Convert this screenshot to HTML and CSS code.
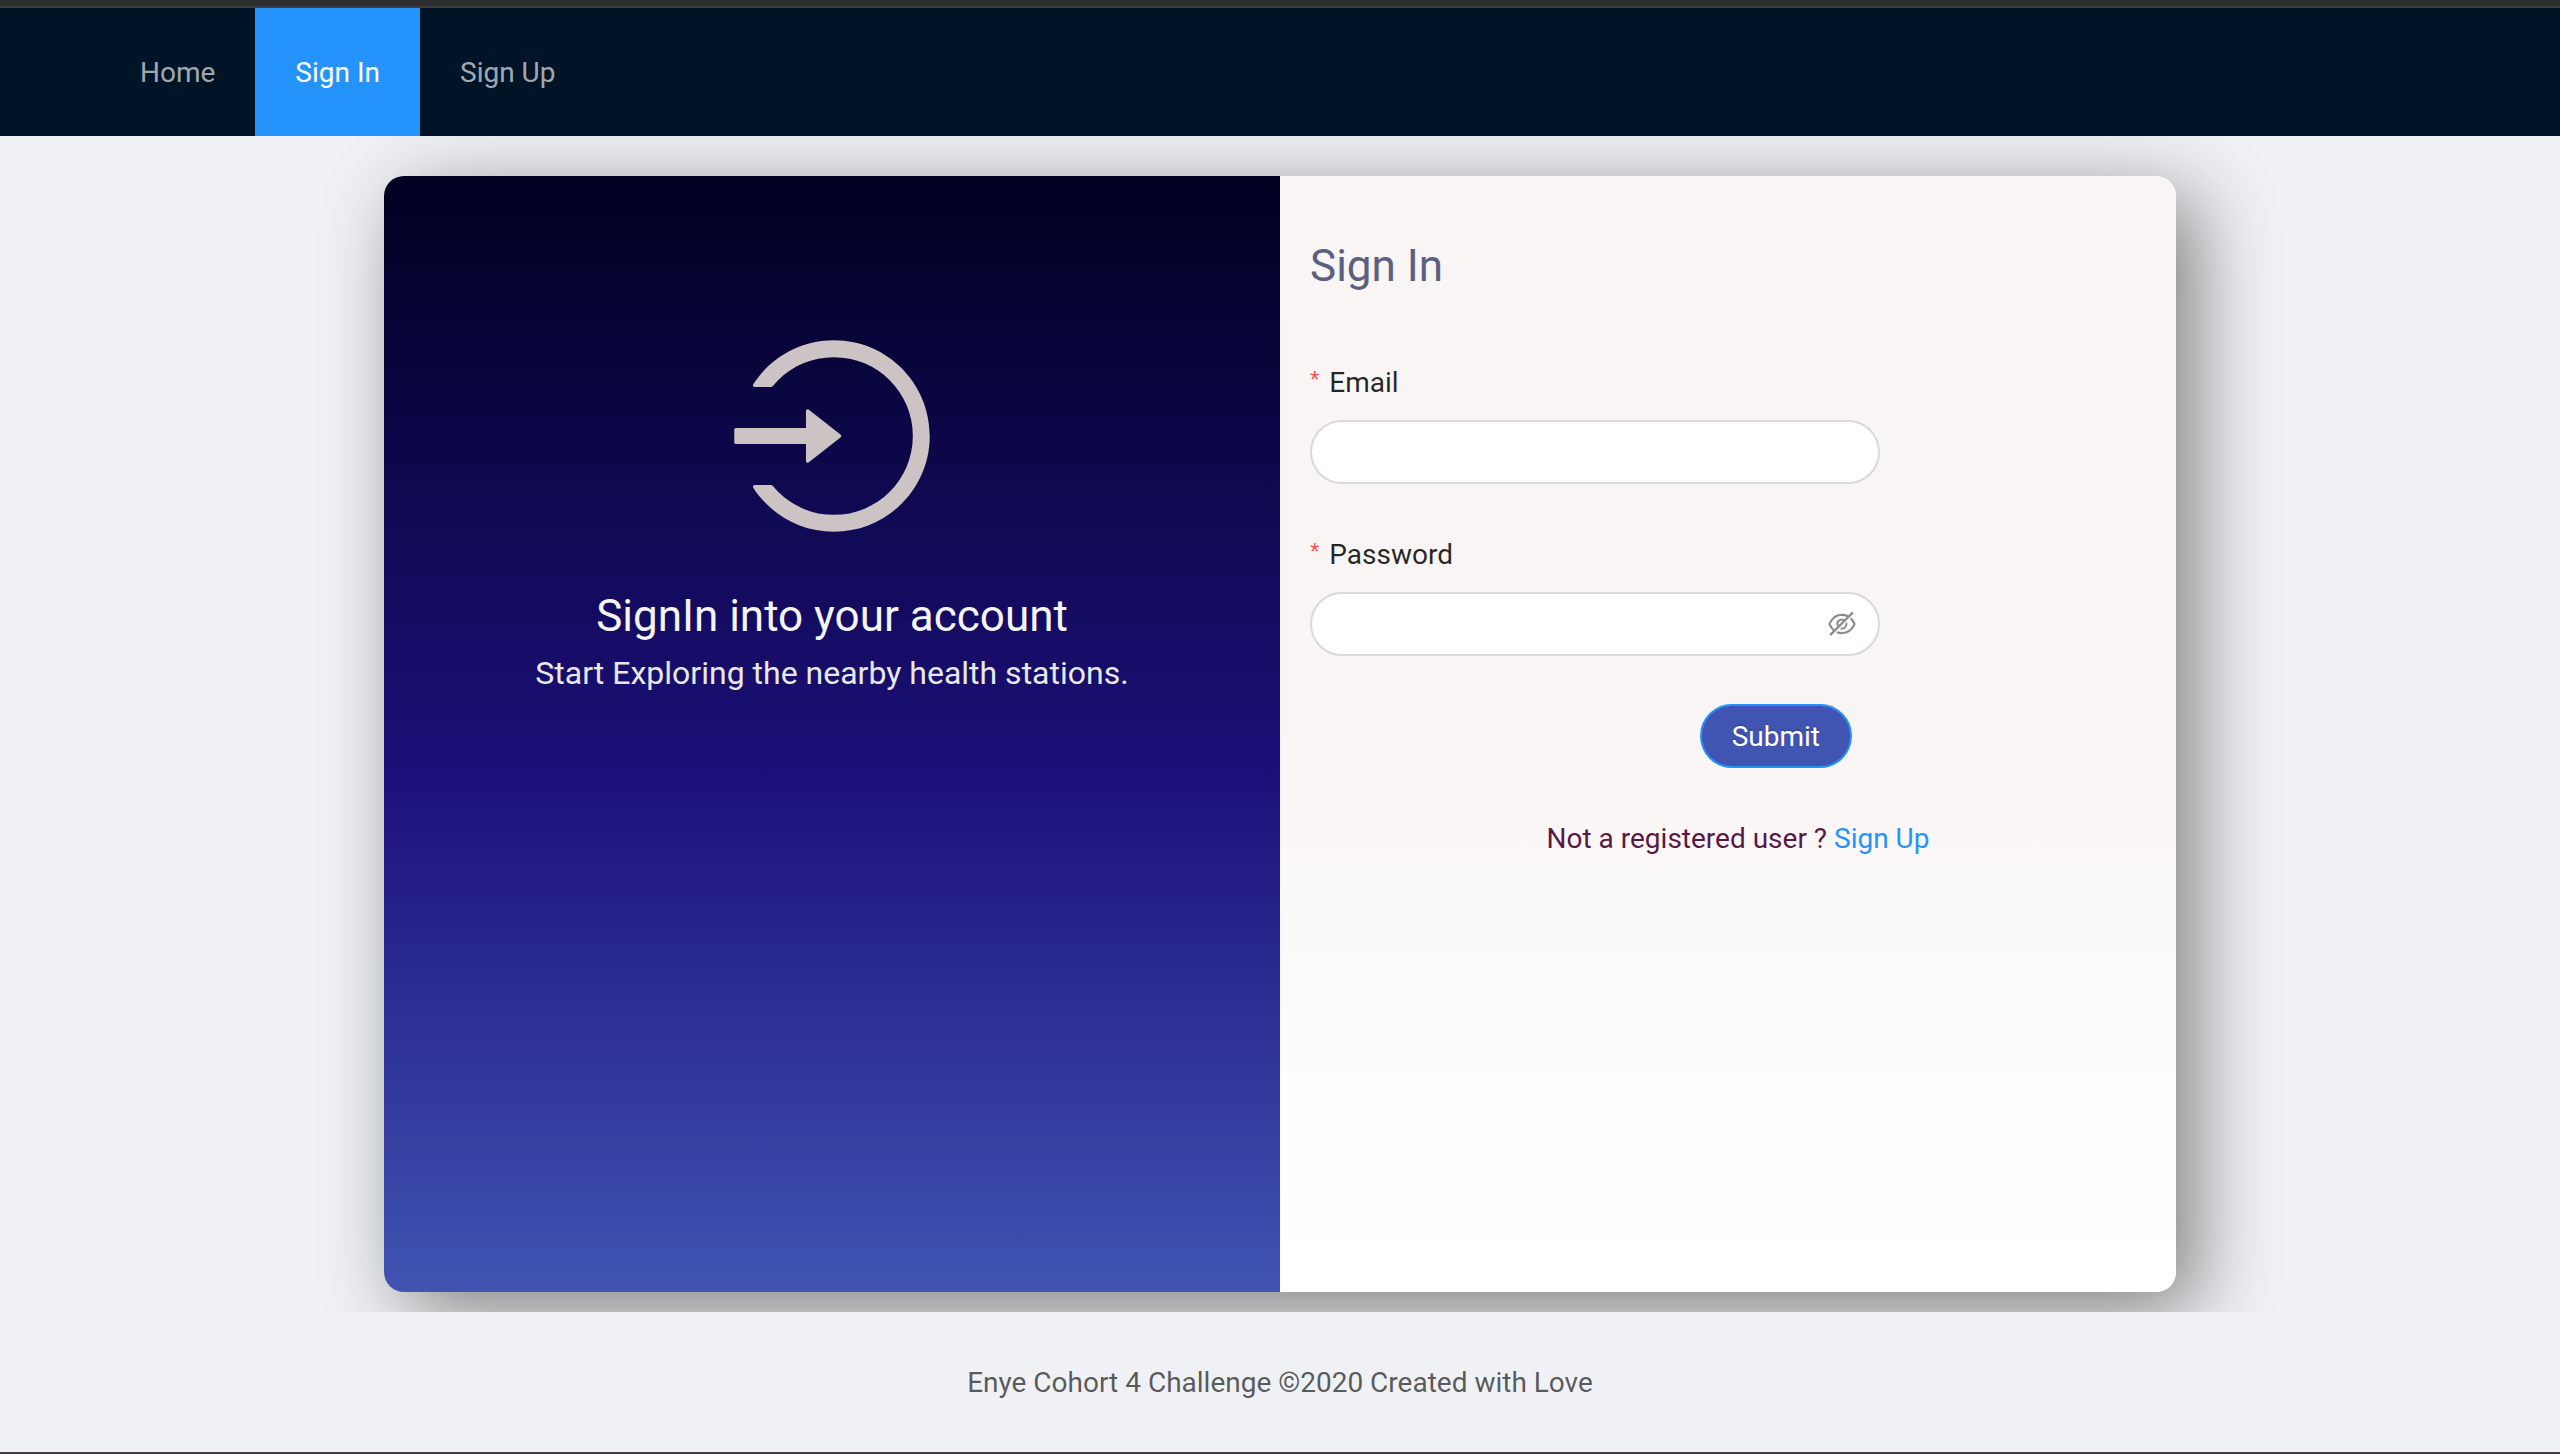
FILE: index.html
```
<!DOCTYPE html>
<html lang="en">
<head>
  <meta charset="utf-8">
  <meta name="viewport" content="width=device-width, initial-scale=1">
  <title>Sign In</title>
  <link rel="stylesheet" href="styles.css">
</head>
<body>
  <header class="header">
    <nav class="menu" aria-label="Main">
      <a class="menu-item" href="#home">Home</a>
      <a class="menu-item menu-item-active" href="#signin" aria-current="page">Sign In</a>
      <a class="menu-item" href="#signup">Sign Up</a>
    </nav>
  </header>

  <main class="content">
    <div class="card">
      <section class="intro">
        <svg class="intro-icon" viewBox="0 0 1024 1024" fill="currentColor" aria-hidden="true">
          <path d="M521.7 82c-152.5-.4-286.7 78.5-363.4 197.7-3.4 5.3.4 12.3 6.7 12.3h70.3c4.8 0 9.3-2.1 12.3-5.8 7-8.5 14.5-16.7 22.4-24.5 32.6-32.5 70.5-58.1 112.7-75.9 43.6-18.4 90-27.8 137.9-27.8 47.9 0 94.3 9.3 137.9 27.8 42.2 17.8 80.1 43.4 112.7 75.9 32.6 32.5 58.1 70.4 76 112.5C865.7 417.8 875 464.1 875 512c0 47.9-9.4 94.2-27.8 137.8-17.8 42.1-43.4 80-76 112.5s-70.5 58.1-112.7 75.9A352.8 352.8 0 01520.6 866c-47.9 0-94.3-9.4-137.9-27.8A353.84 353.84 0 01270 762.3c-7.9-7.9-15.3-16.1-22.4-24.5-3-3.7-7.6-5.8-12.3-5.8H165c-6.3 0-10.2 7-6.7 12.3C234.9 863.2 368.5 942 520.6 942c236.2 0 428-190.1 430.4-425.6C953.4 277.1 761.3 82.6 521.7 82zM395.02 624v-76h-314c-4.4 0-8-3.6-8-8v-56c0-4.4 3.6-8 8-8h314v-76c0-6.7 7.8-10.5 13-6.3l141.9 112a8 8 0 010 12.6l-141.9 112c-5.2 4.1-13 .4-13-6.3z"/>
        </svg>
        <h2 class="intro-title">SignIn into your account</h2>
        <p class="intro-text">Start Exploring the nearby health stations.</p>
      </section>

      <section class="panel">
        <h1 class="panel-title">Sign In</h1>
        <form class="form">
          <div class="field">
            <label class="label" for="email"><span class="required">*</span>Email</label>
            <input class="input" id="email" type="email" required>
          </div>
          <div class="field">
            <label class="label" for="password"><span class="required">*</span>Password</label>
            <div class="password">
              <input class="input" id="password" type="password" required>
              <button class="reveal" type="button" aria-label="Show password">
                <svg class="reveal-icon" viewBox="0 0 1024 1024" fill="currentColor" aria-hidden="true">
                  <path d="M942.2 486.2Q889.47 375.11 816.7 305l-50.88 50.88C807.31 395.53 843.45 447.4 874.7 512 791.5 684.2 673.4 766 512 766q-72.67 0-133.87-22.38L323 798.75Q408 838 512 838q288.3 0 430.2-300.3a60.29 60.29 0 000-51.5zm-63.57-320.64L836 122.88a8 8 0 00-11.32 0L715.31 232.2Q624.86 186 512 186q-288.3 0-430.2 300.3a60.3 60.3 0 000 51.5q56.69 119.4 136.5 191.41L112.48 835a8 8 0 000 11.31L155.17 889a8 8 0 0011.31 0l712.15-712.12a8 8 0 000-11.32zM149.3 512C232.6 339.8 350.7 258 512 258c54.54 0 104.13 9.36 149.12 28.39l-70.3 70.3a176 176 0 00-238.13 238.13l-83.42 83.42C223.1 637.49 183.3 582.28 149.3 512zm246.7 0a112.11 112.11 0 01146.2-106.69L401.31 546.2A112 112 0 01396 512z"/>
                  <path d="M508 624c-3.46 0-6.87-.16-10.25-.47l-52.82 52.82a176.09 176.09 0 00227.42-227.42l-52.82 52.82c.31 3.38.47 6.79.47 10.25a111.94 111.94 0 01-112 112z"/>
                </svg>
              </button>
            </div>
          </div>
          <div class="actions">
            <button class="submit" type="submit">Submit</button>
          </div>
        </form>
        <p class="switch">Not a registered user ? <a class="switch-link" href="#signup">Sign Up</a></p>
      </section>
    </div>
  </main>

  <footer class="footer">Enye Cohort 4 Challenge ©2020 Created with Love</footer>
</body>
</html>
```
FILE: styles.css
```
* {
  box-sizing: border-box;
}

body {
  margin: 0;
  min-height: 100vh;
  display: flex;
  flex-direction: column;
  background: #f0f1f5;
  border-top: 6px solid #2d2d2d;
  border-bottom: 2px solid #403e41;
  color: rgba(0, 0, 0, 0.65);
  font-family: Roboto, "Liberation Sans", sans-serif;
  font-size: 28px;
  line-height: 44px;
}

h1,
h2,
p {
  margin: 0;
  font-weight: 400;
}

a {
  text-decoration: none;
}

.header {
  padding: 0 100px;
  background: #001428;
  border-top: 2px solid #3a3a3a;
}

.menu {
  display: flex;
}

.menu-item {
  padding: 2px 40px 0;
  line-height: 126px;
  color: rgba(255, 255, 255, 0.65);
}

.menu-item-active {
  background: #2593fc;
  color: #fff;
}

.content {
  flex: 1;
  display: flex;
  justify-content: center;
  padding: 40px 0 20px;
  overflow: hidden;
}

.card {
  width: 70%;
  display: grid;
  grid-template-columns: 1fr 1fr;
  border-radius: 20px;
  box-shadow: 20px 20px 80px #808080;
}

.intro {
  display: flex;
  flex-direction: column;
  align-items: center;
  padding: 146px 30px 60px;
  border-radius: 20px 0 0 20px;
  background: linear-gradient(#000020, #1c107a 54%, #4054b2);
  text-align: center;
}

.intro-icon {
  width: 228px;
  height: 228px;
  color: #ccc3c4;
}

.intro-title {
  margin-top: 36px;
  font-size: 44px;
  line-height: 60px;
  color: #f5f5f5;
}

.intro-text {
  font-size: 32px;
  line-height: 54px;
  color: #e8e8e8;
}

.panel {
  padding: 60px 30px;
  border-radius: 0 20px 20px 0;
  background: linear-gradient(#f9f5f4 50%, #fdfcfd 80%, #fff);
}

.panel-title {
  font-size: 44px;
  line-height: 60px;
  color: #5c6080;
}

.form {
  display: flex;
  flex-direction: column;
  gap: 48px;
  max-width: 570px;
  margin-top: 64px;
}

.field {
  display: flex;
  flex-direction: column;
  gap: 14px;
}

.label {
  line-height: 46px;
  color: rgba(0, 0, 0, 0.85);
}

.required {
  margin-right: 10px;
  color: #ff4d4f;
  font-family: "Liberation Sans", sans-serif;
  font-size: 24px;
  line-height: 24px;
  vertical-align: 4px;
}

.input {
  display: block;
  width: 100%;
  height: 64px;
  padding: 8px 22px;
  border: 2px solid #d9d9d9;
  border-radius: 32px;
  background: #fff;
  color: rgba(0, 0, 0, 0.65);
  font: inherit;
}

.password {
  position: relative;
}

.password .input {
  padding-right: 64px;
}

.reveal {
  position: absolute;
  top: 0;
  right: 22px;
  height: 64px;
  padding: 0;
  border: 0;
  background: none;
  color: rgba(0, 0, 0, 0.45);
}

.reveal-icon {
  display: block;
  width: 32px;
  height: 32px;
}

.actions {
  display: flex;
  justify-content: flex-end;
  padding-right: 28px;
}

.submit {
  height: 64px;
  padding: 2px 30px 0;
  border: 2px solid #2593fc;
  border-radius: 32px;
  background: #4054b2;
  color: #fff;
  font: inherit;
  text-shadow: 0 -2px 0 rgba(0, 0, 0, 0.12);
}

.switch {
  margin-top: 48px;
  padding-left: 20px;
  line-height: 46px;
  text-align: center;
  color: #5a1846;
}

.switch-link {
  color: #2593fc;
}

.footer {
  padding: 48px 100px 46px;
  line-height: 46px;
  text-align: center;
}
```
